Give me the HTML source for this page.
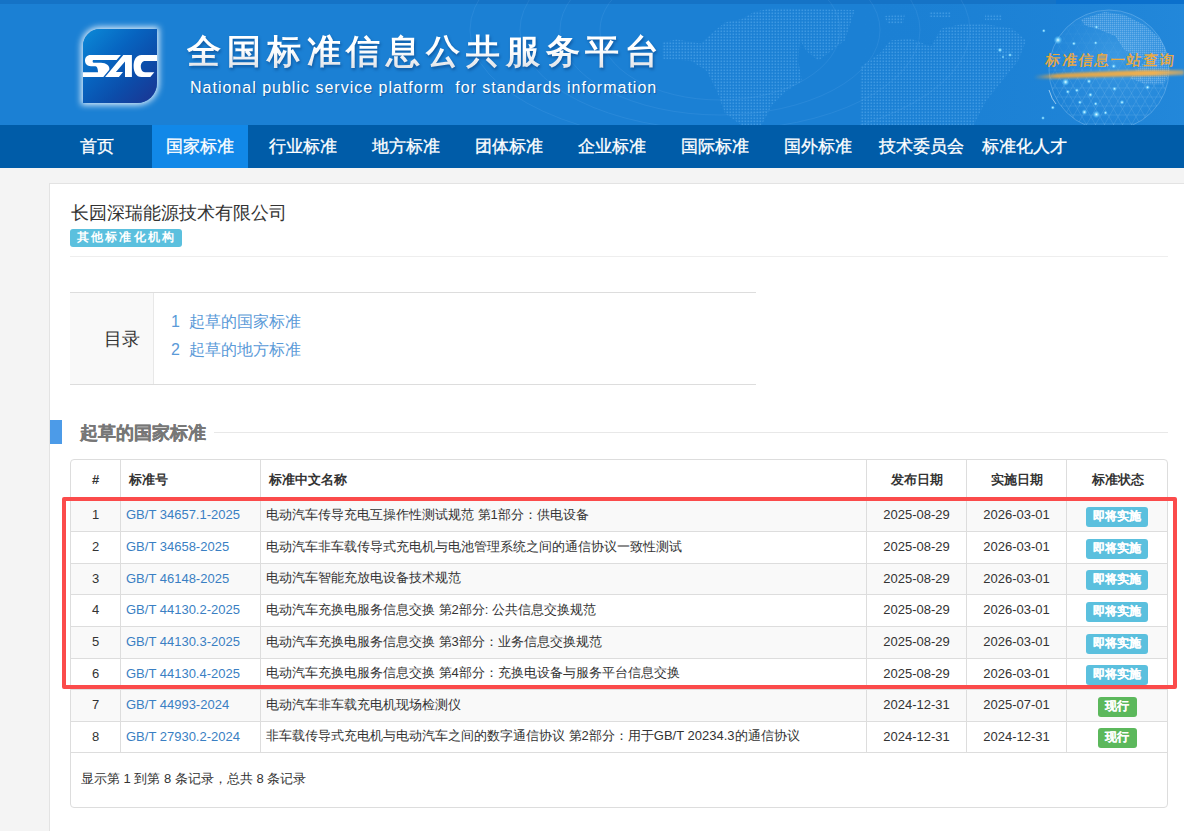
<!DOCTYPE html>
<html><head><meta charset="utf-8">
<style>
*{box-sizing:border-box;margin:0;padding:0}
html,body{width:1184px;height:831px;overflow:hidden}
body{font-family:"Liberation Sans",sans-serif;font-size:13px;color:#333;background:#f4f4f4;position:relative}
#banner{position:absolute;left:0;top:0;width:1184px;height:125px;background:#1b80d4;overflow:hidden}
#banner .strip{position:absolute;left:0;top:0;width:1184px;height:4px;background:linear-gradient(90deg,#1573c6 0,#1573c6 1056px,#0b70cc 1056px)}
#slogan{position:absolute;left:1046px;top:49.5px;font-size:14.5px;font-weight:normal;font-style:normal;color:#f0aa38;letter-spacing:1.2px;white-space:nowrap;line-height:20px;transform:skewX(-6deg);-webkit-text-stroke:0.35px #f0aa38}
#logo{position:absolute;left:83px;top:29px;width:74px;height:74px;border-radius:17px 0 20px 0;
 background:linear-gradient(135deg,#0b8ad8 0%,#0764c0 38%,#0b4eab 65%,#1c3391 100%);
 box-shadow:0 0 6px 2px rgba(255,255,255,.85)}
#logo svg{position:absolute;left:0;top:0}
#title{position:absolute;left:187px;top:28.5px;font-size:34px;font-weight:bold;letter-spacing:5.85px;white-space:nowrap;line-height:44px;background:linear-gradient(180deg,#fff 0%,#fff 45%,#d9dde3 100%);-webkit-background-clip:text;background-clip:text;color:transparent;filter:drop-shadow(1px 2px 1.5px rgba(0,40,100,.45))}
#entitle{position:absolute;left:190px;top:77.5px;font-size:16px;color:#fff;white-space:nowrap;line-height:20px;letter-spacing:1px;text-shadow:1px 1px 1px rgba(0,40,100,.4)}
#nav{position:absolute;left:0;top:125px;width:1184px;height:43px;background:#005ca8}
#nav a{position:absolute;top:0;width:96px;height:43px;line-height:43px;text-align:center;color:#fff;font-size:16.5px;-webkit-text-stroke:0.3px #fff;text-decoration:none;white-space:nowrap}
#nav a.on{background:#1188e8}
#panel{position:absolute;left:49px;top:183px;width:1140px;height:700px;background:#fff;border:1px solid #e3e3e3}
.abs{position:absolute;white-space:nowrap}
#cname{left:20.5px;top:16px;font-size:18px;color:#333;line-height:26px}
#badge{left:20px;top:45px;width:112px;height:18px;background:#5bc0de;border-radius:3px;color:#fff;font-size:11.5px;font-weight:bold;line-height:17.5px;padding-left:6.5px;letter-spacing:2.25px}
#hr1{left:20px;top:72px;width:1098px;height:1px;background:#eee}
#toc{left:20px;top:108px;width:686px;height:93px;border-top:1px solid #ddd;border-bottom:1px solid #ddd}
#toc .l{position:absolute;left:0;top:0;width:84px;height:91px;background:#f9f9f9;border-right:1px solid #e8e8e8}
#toc .l span{position:absolute;left:34px;top:35px;font-size:18px;line-height:22px;color:#333}
#toc .r{position:absolute;left:101px;top:15px;font-size:16px;line-height:27.6px;color:#5a9ad8}
#bar{left:0;top:236px;width:12px;height:24px;background:#4c9be8}
#sh{left:30px;top:238px;font-size:18px;font-weight:bold;color:#777;line-height:22px;-webkit-text-stroke:0.25px #777}
#shline{left:164px;top:248px;width:954px;height:1px;background:#e8e8e8}
#tbox{left:20px;top:275px;width:1098px;height:349px;border:1px solid #ddd;border-radius:4px;overflow:hidden}
table{border-collapse:collapse;position:absolute;left:-1px;top:-1px;width:1099px;table-layout:fixed}
th,td{border:1px solid #ddd;font-size:13px;white-space:nowrap;overflow:hidden}
th{height:40px;font-weight:bold;text-align:left;padding:0 8px;color:#333}
td{padding:0 5px 1.5px;color:#333}
tr.s td{background:#f9f9f9}
.c{text-align:center}
td a{color:#3a7fc3;text-decoration:none}
.lb{display:inline-block;height:20px;line-height:18.5px;border-radius:3px;color:#fff;font-weight:bold;font-size:12px;padding:0 1px 0 0;text-align:center;vertical-align:middle;position:relative;top:2px;left:-1px;-webkit-text-stroke:0.1px #fff}
.lb.i{background:#5bc0de;width:62px}
.lb.g{background:#5cb85c;width:39px}
#foot{left:10px;top:311px;font-size:13px;color:#333;line-height:16px}
#red{position:absolute;left:62px;top:497px;width:1115px;height:192px;border:4px solid #fb4b4b;border-radius:2px}
</style></head>
<body>
<div id="banner">
 <div class="strip"></div>
 <svg id="bgsvg" width="1184" height="125" viewBox="0 0 1184 125" style="position:absolute;left:0;top:0">
  <defs>
   <pattern id="dots" width="3" height="3" patternUnits="userSpaceOnUse"><rect x="0.5" y="0.5" width="1.6" height="1.6" fill="#5fb0f0"/></pattern>
   <radialGradient id="glb" cx="0.55" cy="0.4" r="0.6">
    <stop offset="0" stop-color="#6fc0f5" stop-opacity="0.35"/>
    <stop offset="0.8" stop-color="#3a9ae8" stop-opacity="0.18"/>
    <stop offset="1" stop-color="#2a8ae0" stop-opacity="0"/>
   </radialGradient>
   <radialGradient id="glow"><stop offset="0" stop-color="#f0fbff"/><stop offset="0.3" stop-color="#8fe0ff" stop-opacity="0.9"/><stop offset="1" stop-color="#40b0f8" stop-opacity="0"/></radialGradient>
   <linearGradient id="gold" x1="0" x2="1"><stop offset="0" stop-color="#e8a640" stop-opacity="0"/><stop offset="0.15" stop-color="#e8a640" stop-opacity="0.9"/><stop offset="0.8" stop-color="#f0b050"/><stop offset="1" stop-color="#f0b050" stop-opacity="0.6"/></linearGradient>
   <filter id="bl" x="-10%" y="-100%" width="120%" height="300%"><feGaussianBlur stdDeviation="0.9"/></filter>
   <pattern id="dots2" width="2" height="2" patternUnits="userSpaceOnUse"><rect width="1.4" height="1.4" fill="#cfe8ff"/></pattern>
   <linearGradient id="rfade" x1="0" x2="1"><stop offset="0" stop-color="#1b80d4" stop-opacity="0"/><stop offset="1" stop-color="#2a8fe0" stop-opacity="0.5"/></linearGradient>
  </defs>
  <rect x="850" y="4" width="334" height="121" fill="url(#rfade)"/>
  <g fill="none" stroke="#9fd0ff" stroke-opacity="0.13" stroke-width="0.8">
   <ellipse cx="720" cy="30" rx="120" ry="70"/>
   <ellipse cx="720" cy="30" rx="160" ry="85"/>
   <ellipse cx="720" cy="30" rx="200" ry="100"/>
   <ellipse cx="720" cy="30" rx="250" ry="115"/>
  </g>
  
  <g fill="url(#dots)" opacity="0.5">
   <path d="M662.3,42.6 L676.5,39.5 L700.8,43.6 L715,30.4 L725.1,22.3 L741.4,19.3 L753.5,12.2 L771.8,8.1 L854.9,10.1 L844.7,40.5 L818.4,60.8 L806.2,50.7 L800.1,40 L798.1,60.8 L802.2,81.1 L786,91.2 L771.8,105.4 L761.6,125 L741.4,125 L725.1,113.5 L717,91.2 L706.9,71 L690.7,60.8 L662.3,58.8 Z"/>
   <path d="M860,66.9 L880.3,52.7 L890.4,40.5 L910.7,38.5 L931,46.6 L941.1,28.4 L961.4,24.3 L985.7,24.3 L1012,28.4 L1026.2,40.5 L1018.1,60.8 L1001.9,81.1 L985.7,101.4 L973.5,125 L860,125 Z"/>
   <path d="M884,16 L905,14 L903,24 L888,24 Z M929,12 L951,12 L951,17 L929,17 Z M985,14 L1002,14 L1002,20 L985,20 Z M1002,50 L1012,50 L1012,56 L1002,56 Z"/>
  </g>
  <mask id="lmask"><rect x="1040" y="0" width="144" height="125" fill="url(#lgrad)"/></mask>
  <linearGradient id="lgrad" x1="0" y1="0" x2="0" y2="1"><stop offset="0" stop-color="#fff" stop-opacity="0.1"/><stop offset="0.45" stop-color="#fff" stop-opacity="0.4"/><stop offset="0.7" stop-color="#fff" stop-opacity="1"/></linearGradient>
  <clipPath id="gclip"><circle cx="1109" cy="70" r="60"/></clipPath>
  <circle cx="1109" cy="70" r="60" fill="url(#glb)"/>
  <g clip-path="url(#gclip)">
   <path d="M1029,-20.0 L1189,-20.0 M1029,-11.0 L1189,-11.0 M1029,-2.0 L1189,-2.0 M1029,7.0 L1189,7.0 M1029,16.0 L1189,16.0 M1029,25.0 L1189,25.0 M1029,34.0 L1189,34.0 M1029,43.0 L1189,43.0 M1029,52.0 L1189,52.0 M1029,61.0 L1189,61.0 M1029,70.0 L1189,70.0 M1029,79.0 L1189,79.0 M1029,88.0 L1189,88.0 M1029,97.0 L1189,97.0 M1029,106.0 L1189,106.0 M1029,115.0 L1189,115.0 M1029,124.0 L1189,124.0 M1029,133.0 L1189,133.0 M1029,142.0 L1189,142.0 M1029,151.0 L1189,151.0 M1029,160.0 L1189,160.0 M1145.0,-54.7 L1235.0,101.2 M1138.2,-50.8 L1228.2,105.1 M1131.5,-46.9 L1221.5,109.0 M1124.8,-43.0 L1214.8,112.9 M1118.0,-39.1 L1208.0,116.8 M1111.2,-35.2 L1201.2,120.7 M1104.5,-31.3 L1194.5,124.6 M1097.8,-27.4 L1187.8,128.5 M1091.0,-23.5 L1181.0,132.4 M1084.2,-19.6 L1174.2,136.3 M1077.5,-15.7 L1167.5,140.1 M1070.8,-11.8 L1160.8,144.0 M1064.0,-7.9 L1154.0,147.9 M1057.2,-4.0 L1147.2,151.8 M1050.5,-0.1 L1140.5,155.7 M1043.8,3.7 L1133.8,159.6 M1037.0,7.6 L1127.0,163.5 M1030.2,11.5 L1120.2,167.4 M1023.5,15.4 L1113.5,171.3 M1016.8,19.3 L1106.8,175.2 M1010.0,23.2 L1100.0,179.1 M1003.2,27.1 L1093.2,183.0 M996.5,31.0 L1086.5,186.9 M989.8,34.9 L1079.8,190.8 M983.0,38.8 L1073.0,194.7 M983.0,101.2 L1073.0,-54.7 M989.8,105.1 L1079.8,-50.8 M996.5,109.0 L1086.5,-46.9 M1003.2,112.9 L1093.2,-43.0 M1010.0,116.8 L1100.0,-39.1 M1016.8,120.7 L1106.8,-35.2 M1023.5,124.6 L1113.5,-31.3 M1030.2,128.5 L1120.2,-27.4 M1037.0,132.4 L1127.0,-23.5 M1043.8,136.3 L1133.8,-19.6 M1050.5,140.1 L1140.5,-15.7 M1057.2,144.0 L1147.2,-11.8 M1064.0,147.9 L1154.0,-7.9 M1070.8,151.8 L1160.8,-4.0 M1077.5,155.7 L1167.5,-0.1 M1084.2,159.6 L1174.2,3.7 M1091.0,163.5 L1181.0,7.6 M1097.8,167.4 L1187.8,11.5 M1104.5,171.3 L1194.5,15.4 M1111.2,175.2 L1201.2,19.3 M1118.0,179.1 L1208.0,23.2 M1124.8,183.0 L1214.8,27.1 M1131.5,186.9 L1221.5,31.0 M1138.2,190.8 L1228.2,34.9 M1145.0,194.7 L1235.0,38.8" stroke="#d8f0ff" stroke-opacity="0.2" stroke-width="0.6" fill="none" mask="url(#lmask)"/>
   <path d="M1080.6,19.6 L1104.7,12 L1124.3,15 L1145.3,25.6 L1160.4,39.1 L1167.9,52.7 L1169.4,70.7 L1163.4,84.3 L1145.3,84.3 L1130.3,78.2 L1136.3,70.7 L1145.3,60.2 L1124.3,49.7 L1115.2,36.1 L1100.2,30.1 L1085.1,25.6 Z" fill="url(#dots2)" opacity="0.35"/>
  </g>
  <circle cx="1109" cy="70" r="60" fill="none" stroke="#cfeaff" stroke-opacity="0.3" stroke-width="0.8"/>
  <path d="M1049,90 Q1052,100 1056,104" stroke="#e8f6ff" stroke-opacity="0.6" stroke-width="1" fill="none"/>
  <g>
   <circle cx="1058" cy="40" r="4.5" fill="url(#glow)"/>
   <circle cx="1043.8" cy="30.8" r="2" fill="url(#glow)"/>
   <circle cx="1096.4" cy="27" r="2" fill="url(#glow)"/>
   <circle cx="1073.9" cy="43.6" r="2.2" fill="url(#glow)"/>
   <circle cx="1095.7" cy="42.9" r="2" fill="url(#glow)"/>
   <circle cx="1065.6" cy="82" r="4" fill="url(#glow)"/>
   <circle cx="1089" cy="81.3" r="2.5" fill="url(#glow)"/>
   <circle cx="1114.5" cy="88.8" r="2.5" fill="url(#glow)"/>
   <circle cx="1147.6" cy="87.3" r="2.5" fill="url(#glow)"/>
   <circle cx="1067.8" cy="91.8" r="2.2" fill="url(#glow)"/>
   <circle cx="1076.9" cy="90.3" r="2.2" fill="url(#glow)"/>
   <circle cx="1090.4" cy="94.8" r="2.5" fill="url(#glow)"/>
   <circle cx="1122" cy="102.3" r="2.5" fill="url(#glow)"/>
   <circle cx="1079.9" cy="102.3" r="2.2" fill="url(#glow)"/>
   <circle cx="1095.7" cy="103.8" r="2.2" fill="url(#glow)"/>
   <circle cx="1084.4" cy="112.1" r="3" fill="url(#glow)"/>
   <circle cx="1096.4" cy="114.4" r="4" fill="url(#glow)"/>
   <circle cx="1105.5" cy="112.8" r="2.2" fill="url(#glow)"/>
   <circle cx="1052.8" cy="107.6" r="2.2" fill="url(#glow)"/>
   <circle cx="1043" cy="118" r="2" fill="url(#glow)"/>
   <circle cx="1113.7" cy="66.2" r="2.5" fill="url(#glow)"/>
   <circle cx="1010" cy="55" r="2" fill="url(#glow)"/>
   <circle cx="1000" cy="50" r="2.5" fill="url(#glow)"/>
   <circle cx="1003" cy="57" r="1.5" fill="url(#glow)"/>
  </g>
  <path d="M1034,75.5 Q1100,70 1184,70 L1184,75 Q1100,77 1034,79 Z" fill="url(#gold)" filter="url(#bl)"/>
 </svg>
 <div id="slogan">标准信息一站查询</div>
 <div id="logo">
  <svg width="74" height="74" viewBox="0 0 74 74">
   <g fill="#fff">
    <path d="M37.9,25.9 L8,25.9 C3.5,25.9 2,28.5 2,31.5 C2,34.8 4,37.2 8,37.2 L12.5,37.2 C14,37.2 15,40 15,43.3 L0,43.3 L0,48 L20.3,48 L26.3,40.8 C27.2,37 23,33.8 18,33.8 L10.5,33.8 C9.5,33.8 9.2,31.1 10.5,31.1 L33.6,31.1 Z"/>
    <path d="M22.1,48 L40.3,25.9 L48.9,25.9 L48.9,48 L42,48 L42,32.5 L32.9,42.9 L40,42.9 L35.9,48 Z"/>
    <path d="M74,25.9 L58.5,25.9 C53,25.9 50.6,31 50.6,37 C50.6,43 53,48 58.5,48 L67.3,48 L71.3,43.3 L62,43.3 C59.3,43.3 57.8,40.5 57.8,37.6 C57.8,34.6 59.3,32.1 62,32.1 L74,32.1 Z"/>
   </g>
  </svg>
 </div>
 <div id="title">全国标准信息公共服务平台</div>
 <div id="entitle">National public service platform&nbsp; for standards information</div>
</div>
<div id="nav">
 <a style="left:49px">首页</a>
 <a class="on" style="left:152px">国家标准</a>
 <a style="left:255px">行业标准</a>
 <a style="left:358px">地方标准</a>
 <a style="left:461px">团体标准</a>
 <a style="left:564px">企业标准</a>
 <a style="left:667px">国际标准</a>
 <a style="left:770px">国外标准</a>
 <a style="left:873px">技术委员会</a>
 <a style="left:976px">标准化人才</a>
</div>
<div id="panel">
 <div class="abs" id="cname">长园深瑞能源技术有限公司</div>
 <div class="abs" id="badge">其他标准化机构</div>
 <div class="abs" id="hr1"></div>
 <div class="abs" id="toc">
  <div class="l"><span>目录</span></div>
  <div class="r">1&nbsp; 起草的国家标准<br>2&nbsp; 起草的地方标准</div>
 </div>
 <div class="abs" id="bar"></div>
 <div class="abs" id="sh">起草的国家标准</div>
 <div class="abs" id="shline"></div>
 <div class="abs" id="tbox">
  <table>
   <colgroup><col style="width:50px"><col style="width:140px"><col style="width:606px"><col style="width:100px"><col style="width:100px"><col style="width:103px"></colgroup>
   <tr><th class="c">#</th><th>标准号</th><th>标准中文名称</th><th class="c">发布日期</th><th class="c">实施日期</th><th class="c">标准状态</th></tr>
   <tr class="s" style="height:32px"><td class="c">1</td><td><a>GB/T 34657.1-2025</a></td><td>电动汽车传导充电互操作性测试规范 第1部分：供电设备</td><td class="c">2025-08-29</td><td class="c">2026-03-01</td><td class="c"><span class="lb i">即将实施</span></td></tr>
   <tr style="height:32px"><td class="c">2</td><td><a>GB/T 34658-2025</a></td><td>电动汽车非车载传导式充电机与电池管理系统之间的通信协议一致性测试</td><td class="c">2025-08-29</td><td class="c">2026-03-01</td><td class="c"><span class="lb i">即将实施</span></td></tr>
   <tr class="s" style="height:31px"><td class="c">3</td><td><a>GB/T 46148-2025</a></td><td>电动汽车智能充放电设备技术规范</td><td class="c">2025-08-29</td><td class="c">2026-03-01</td><td class="c"><span class="lb i">即将实施</span></td></tr>
   <tr style="height:32px"><td class="c">4</td><td><a>GB/T 44130.2-2025</a></td><td>电动汽车充换电服务信息交换 第2部分: 公共信息交换规范</td><td class="c">2025-08-29</td><td class="c">2026-03-01</td><td class="c"><span class="lb i">即将实施</span></td></tr>
   <tr class="s" style="height:32px"><td class="c">5</td><td><a>GB/T 44130.3-2025</a></td><td>电动汽车充换电服务信息交换 第3部分：业务信息交换规范</td><td class="c">2025-08-29</td><td class="c">2026-03-01</td><td class="c"><span class="lb i">即将实施</span></td></tr>
   <tr style="height:31px"><td class="c">6</td><td><a>GB/T 44130.4-2025</a></td><td>电动汽车充换电服务信息交换 第4部分：充换电设备与服务平台信息交换</td><td class="c">2025-08-29</td><td class="c">2026-03-01</td><td class="c"><span class="lb i">即将实施</span></td></tr>
   <tr class="s" style="height:32px"><td class="c">7</td><td><a>GB/T 44993-2024</a></td><td>电动汽车非车载充电机现场检测仪</td><td class="c">2024-12-31</td><td class="c">2025-07-01</td><td class="c"><span class="lb g">现行</span></td></tr>
   <tr style="height:31px"><td class="c">8</td><td><a>GB/T 27930.2-2024</a></td><td>非车载传导式充电机与电动汽车之间的数字通信协议 第2部分：用于GB/T 20234.3的通信协议</td><td class="c">2024-12-31</td><td class="c">2024-12-31</td><td class="c"><span class="lb g">现行</span></td></tr>
  </table>
  <div class="abs" id="foot">显示第 1 到第 8 条记录，总共 8 条记录</div>
 </div>
</div>
<div id="red"></div>
</body></html>
